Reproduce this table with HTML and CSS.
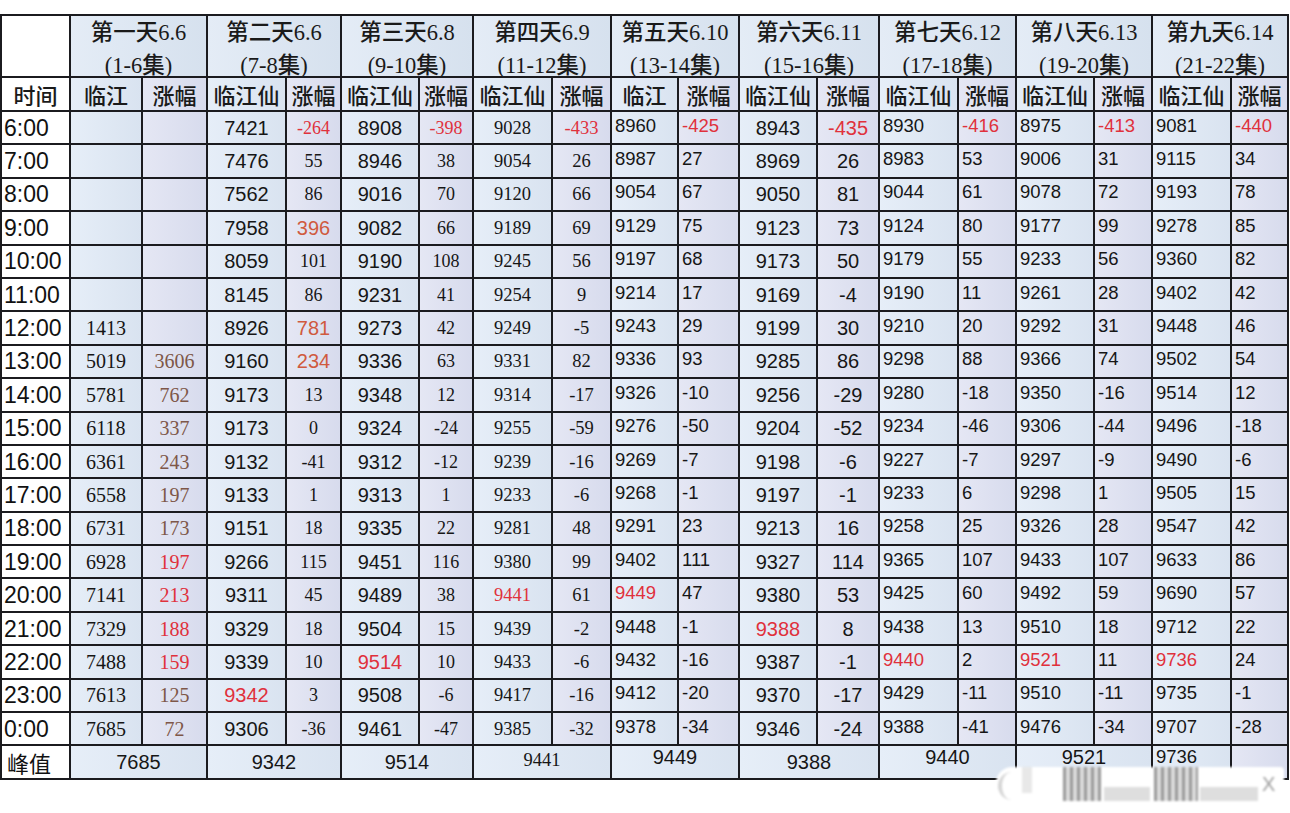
FILE: index.html
```html
<!DOCTYPE html>
<html lang="zh">
<head>
<meta charset="utf-8">
<title>临江仙 热度</title>
<link rel="stylesheet" href="styles.css">
</head>
<body>
<div class="sheet">
  <div class="hrow">
    <div class="corner"></div>
    <div class="day">第一天6.6<br>(1-6集)</div>
    <div class="day">第二天6.6<br>(7-8集)</div>
    <div class="day">第三天6.8<br>(9-10集)</div>
    <div class="day">第四天6.9<br>(11-12集)</div>
    <div class="day">第五天6.10<br>(13-14集)</div>
    <div class="day">第六天6.11<br>(15-16集)</div>
    <div class="day">第七天6.12<br>(17-18集)</div>
    <div class="day">第八天6.13<br>(19-20集)</div>
    <div class="day">第九天6.14<br>(21-22集)</div>
  </div>
  <div class="row sub">
    <div>时间</div>
    <div>临江</div><div>涨幅</div>
    <div>临江仙</div><div>涨幅</div>
    <div>临江仙</div><div>涨幅</div>
    <div>临江仙</div><div>涨幅</div>
    <div>临江</div><div>涨幅</div>
    <div>临江仙</div><div>涨幅</div>
    <div>临江仙</div><div>涨幅</div>
    <div>临江仙</div><div>涨幅</div>
    <div>临江仙</div><div>涨幅</div>
  </div>

  <div class="row data"><div>6:00</div><div></div><div></div><div>7421</div><div class="r">-264</div><div>8908</div><div class="r">-398</div><div>9028</div><div class="r">-433</div><div>8960</div><div class="r">-425</div><div>8943</div><div class="r">-435</div><div>8930</div><div class="r">-416</div><div>8975</div><div class="r">-413</div><div>9081</div><div class="r">-440</div></div>
  <div class="row data"><div>7:00</div><div></div><div></div><div>7476</div><div>55</div><div>8946</div><div>38</div><div>9054</div><div>26</div><div>8987</div><div>27</div><div>8969</div><div>26</div><div>8983</div><div>53</div><div>9006</div><div>31</div><div>9115</div><div>34</div></div>
  <div class="row data"><div>8:00</div><div></div><div></div><div>7562</div><div>86</div><div>9016</div><div>70</div><div>9120</div><div>66</div><div>9054</div><div>67</div><div>9050</div><div>81</div><div>9044</div><div>61</div><div>9078</div><div>72</div><div>9193</div><div>78</div></div>
  <div class="row data"><div>9:00</div><div></div><div></div><div>7958</div><div class="o sa">396</div><div>9082</div><div>66</div><div>9189</div><div>69</div><div>9129</div><div>75</div><div>9123</div><div>73</div><div>9124</div><div>80</div><div>9177</div><div>99</div><div>9278</div><div>85</div></div>
  <div class="row data"><div>10:00</div><div></div><div></div><div>8059</div><div>101</div><div>9190</div><div>108</div><div>9245</div><div>56</div><div>9197</div><div>68</div><div>9173</div><div>50</div><div>9179</div><div>55</div><div>9233</div><div>56</div><div>9360</div><div>82</div></div>
  <div class="row data"><div>11:00</div><div></div><div></div><div>8145</div><div>86</div><div>9231</div><div>41</div><div>9254</div><div>9</div><div>9214</div><div>17</div><div>9169</div><div>-4</div><div>9190</div><div>11</div><div>9261</div><div>28</div><div>9402</div><div>42</div></div>
  <div class="row data"><div>12:00</div><div>1413</div><div></div><div>8926</div><div class="o sa">781</div><div>9273</div><div>42</div><div>9249</div><div>-5</div><div>9243</div><div>29</div><div>9199</div><div>30</div><div>9210</div><div>20</div><div>9292</div><div>31</div><div>9448</div><div>46</div></div>
  <div class="row data"><div>13:00</div><div>5019</div><div class="br">3606</div><div>9160</div><div class="o sa">234</div><div>9336</div><div>63</div><div>9331</div><div>82</div><div>9336</div><div>93</div><div>9285</div><div>86</div><div>9298</div><div>88</div><div>9366</div><div>74</div><div>9502</div><div>54</div></div>
  <div class="row data"><div>14:00</div><div>5781</div><div class="br">762</div><div>9173</div><div>13</div><div>9348</div><div>12</div><div>9314</div><div>-17</div><div>9326</div><div>-10</div><div>9256</div><div>-29</div><div>9280</div><div>-18</div><div>9350</div><div>-16</div><div>9514</div><div>12</div></div>
  <div class="row data"><div>15:00</div><div>6118</div><div class="br">337</div><div>9173</div><div>0</div><div>9324</div><div>-24</div><div>9255</div><div>-59</div><div>9276</div><div>-50</div><div>9204</div><div>-52</div><div>9234</div><div>-46</div><div>9306</div><div>-44</div><div>9496</div><div>-18</div></div>
  <div class="row data"><div>16:00</div><div>6361</div><div class="br">243</div><div>9132</div><div>-41</div><div>9312</div><div>-12</div><div>9239</div><div>-16</div><div>9269</div><div>-7</div><div>9198</div><div>-6</div><div>9227</div><div>-7</div><div>9297</div><div>-9</div><div>9490</div><div>-6</div></div>
  <div class="row data"><div>17:00</div><div>6558</div><div class="br">197</div><div>9133</div><div>1</div><div>9313</div><div>1</div><div>9233</div><div>-6</div><div>9268</div><div>-1</div><div>9197</div><div>-1</div><div>9233</div><div>6</div><div>9298</div><div>1</div><div>9505</div><div>15</div></div>
  <div class="row data"><div>18:00</div><div>6731</div><div class="br">173</div><div>9151</div><div>18</div><div>9335</div><div>22</div><div>9281</div><div>48</div><div>9291</div><div>23</div><div>9213</div><div>16</div><div>9258</div><div>25</div><div>9326</div><div>28</div><div>9547</div><div>42</div></div>
  <div class="row data"><div>19:00</div><div>6928</div><div class="r">197</div><div>9266</div><div>115</div><div>9451</div><div>116</div><div>9380</div><div>99</div><div>9402</div><div>111</div><div>9327</div><div>114</div><div>9365</div><div>107</div><div>9433</div><div>107</div><div>9633</div><div>86</div></div>
  <div class="row data"><div>20:00</div><div>7141</div><div class="r">213</div><div>9311</div><div>45</div><div>9489</div><div>38</div><div class="r">9441</div><div>61</div><div class="r">9449</div><div>47</div><div>9380</div><div>53</div><div>9425</div><div>60</div><div>9492</div><div>59</div><div>9690</div><div>57</div></div>
  <div class="row data"><div>21:00</div><div>7329</div><div class="r">188</div><div>9329</div><div>18</div><div>9504</div><div>15</div><div>9439</div><div>-2</div><div>9448</div><div>-1</div><div class="r">9388</div><div>8</div><div>9438</div><div>13</div><div>9510</div><div>18</div><div>9712</div><div>22</div></div>
  <div class="row data"><div>22:00</div><div>7488</div><div class="r">159</div><div>9339</div><div>10</div><div class="r">9514</div><div>10</div><div>9433</div><div>-6</div><div>9432</div><div>-16</div><div>9387</div><div>-1</div><div class="r">9440</div><div>2</div><div class="r">9521</div><div>11</div><div class="r">9736</div><div>24</div></div>
  <div class="row data"><div>23:00</div><div>7613</div><div class="br">125</div><div class="r">9342</div><div>3</div><div>9508</div><div>-6</div><div>9417</div><div>-16</div><div>9412</div><div>-20</div><div>9370</div><div>-17</div><div>9429</div><div>-11</div><div>9510</div><div>-11</div><div>9735</div><div>-1</div></div>
  <div class="row data"><div>0:00</div><div>7685</div><div class="br">72</div><div>9306</div><div>-36</div><div>9461</div><div>-47</div><div>9385</div><div>-32</div><div>9378</div><div>-34</div><div>9346</div><div>-24</div><div>9388</div><div>-41</div><div>9476</div><div>-34</div><div>9707</div><div>-28</div></div>

  <div class="peak">
    <div class="pt">峰值</div>
    <div class="pv">7685</div>
    <div class="pv">9342</div>
    <div class="pv">9514</div>
    <div class="pv pse">9441</div>
    <div class="pv up">9449</div>
    <div class="pv">9388</div>
    <div class="pv up">9440</div>
    <div class="pv up">9521</div>
    <div class="pv one lft up">9736</div>
    <div class="pe"></div>
  </div>
</div>

<div class="wm">
  <span class="wm-arc"></span>
  <span class="wm-bar w1"></span>
  <span class="wm-streak s1"></span>
  <span class="wm-bar w2"></span>
  <span class="wm-streak s2"></span>
  <span class="wm-bar w3"></span>
  <span class="wm-x">X</span>
</div>
</body>
</html>
```

FILE: styles.css
```css
html, body {
  margin: 0;
  padding: 0;
  background: #ffffff;
}
body {
  width: 1290px;
  height: 813px;
  overflow: hidden;
  position: relative;
  font-family: "Liberation Sans", "Noto Sans CJK SC", sans-serif;
  color: #161616;
}

/* the whole sheet: grid lines are the dark background showing through the gaps */
.sheet {
  display: grid;
  grid-template-columns: 67px 70px 63px 77px 53px 76px 52px 77px 57px 65px 59px 76px 60px 77px 56px 76px 56px 77px 55px;
  grid-template-rows: 60px 32px repeat(19, 31.4px) 32px;
  gap: 2px;
  padding: 2px;
  width: max-content;
  margin-top: 14px;
  background: #1b1b1f;
}
.hrow, .row, .peak {
  display: contents;
}
.sheet > * > div {
  display: flex;
  align-items: center;
  justify-content: center;
  overflow: hidden;
  white-space: nowrap;
}

/* ---- header row 1 ---- */
.corner {
  background: #ffffff;
}
.day {
  grid-column: span 2;
  flex-direction: column;
  padding-top: 5px;
  font-family: "Liberation Serif", "Noto Sans CJK SC", serif;
  font-size: 22.5px;
  font-weight: 500;
  line-height: 33px;
  text-align: center;
  color: #1a1a1a;
  background: linear-gradient(90deg, #e4ecf6 0%, #d6e1ee 100%);
}

/* ---- header row 2 ---- */
.sub > div {
  font-family: "Noto Sans CJK SC", sans-serif;
  font-size: 22px;
  font-weight: 500;
  color: #1a1a1a;
}

/* ---- backgrounds by column ---- */
.row > div:nth-child(even),
.pv {
  background: linear-gradient(90deg, #e6eef8 0%, #d9e3f0 100%);
}
.row > div:nth-child(odd),
.pe {
  background: linear-gradient(90deg, #e5e7f4 0%, #d7dbed 100%);
}
.row > div:first-child,
.pt {
  background: #ffffff;
}

/* ---- data typography by column ---- */
.data > div {
  font-family: "Liberation Sans", sans-serif;
  font-size: 20px;
  line-height: 24px;
}
.data > div:first-child {
  justify-content: flex-start;
  padding-left: 2px;
  font-size: 23px;
  color: #111111;
}
/* day 1: serif */
.data > div:nth-child(2),
.data > div:nth-child(3) {
  font-family: "Liberation Serif", serif;
  font-size: 20px;
}
/* day 2 & 3 rise columns: small serif */
.data > div:nth-child(5),
.data > div:nth-child(7) {
  font-family: "Liberation Serif", serif;
  font-size: 18px;
}
/* day 4: serif */
.data > div:nth-child(8),
.data > div:nth-child(9) {
  font-family: "Liberation Serif", serif;
  font-size: 18.5px;
}
/* day 5, 7, 8, 9: left-aligned sans, slightly raised */
.data > div:nth-child(10),
.data > div:nth-child(11),
.data > div:nth-child(n+14) {
  justify-content: flex-start;
  padding: 0 0 4px 3px;
  font-size: 18.5px;
}
.data > div.sa {
  font-family: "Liberation Sans", sans-serif;
  font-size: 20px;
}

/* ---- colours ---- */
.r { color: #e0313c; }
.o { color: #d05a3e; }
.br { color: #7e5748; }

/* ---- peak row ---- */
.pt {
  justify-content: flex-start !important;
  padding-left: 5px;
  font-family: "Noto Sans CJK SC", sans-serif;
  font-size: 22px;
  color: #111111;
}
.pv {
  grid-column: span 2;
  font-size: 20px;
  line-height: 24px;
}
.pv.pse {
  font-family: "Liberation Serif", serif;
  font-size: 18.5px;
  padding-bottom: 4px;
}
.pv.up {
  padding-bottom: 10px;
}
.pv.one {
  grid-column: span 1;
}
.pv.lft {
  justify-content: flex-start;
  padding-left: 3px;
  font-size: 18.5px;
}

/* ---- blurred watermark overlay ---- */
.wm {
  position: absolute;
  left: 996px;
  top: 767px;
  width: 288px;
  height: 38px;
  background: #ffffff;
  border-radius: 16px 4px 4px 16px;
  filter: blur(1.3px);
}
.wm span {
  position: absolute;
  display: block;
}
.wm-arc {
  left: 2px;
  top: 5px;
  width: 16px;
  height: 28px;
  border-left: 4px solid #d6d6d6;
  border-radius: 14px 0 0 14px;
}
.wm-bar {
  background: #dedede;
}
.w1 { left: 26px; top: 0; width: 10px; height: 26px; background: #e8e8e8; }
.w2 { left: 108px; top: 20px; width: 46px; height: 14px; }
.w3 { left: 204px; top: 20px; width: 58px; height: 14px; }
.wm-streak {
  top: 0;
  height: 34px;
  background: repeating-linear-gradient(90deg, #9a9a9a 0 3px, #dcdcdc 3px 7px);
}
.s1 { left: 67px; width: 38px; }
.s2 { left: 158px; width: 44px; }
.wm-x {
  left: 266px;
  top: 6px;
  font-size: 20px;
  color: #a0a0a0;
  font-family: "Liberation Sans", sans-serif;
}
```
